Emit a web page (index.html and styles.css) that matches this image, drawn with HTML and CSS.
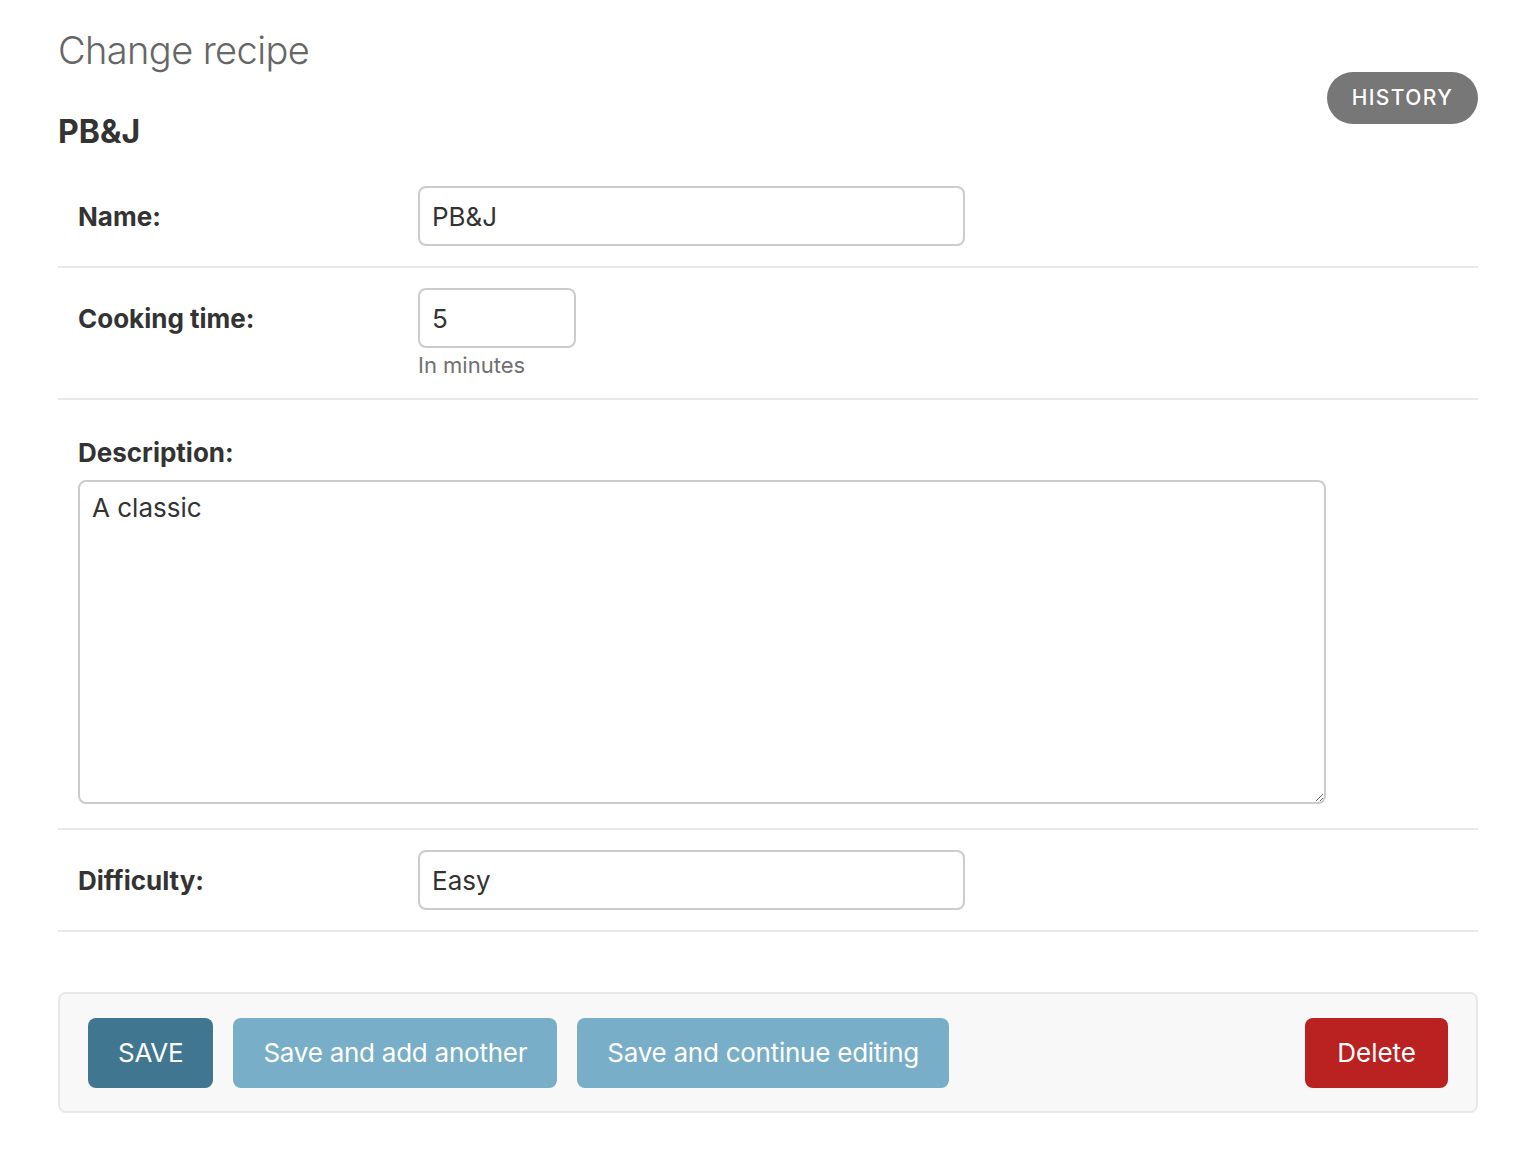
FILE: index.html
```html
<!DOCTYPE html>
<html lang="en">
<head>
<meta charset="utf-8">
<title>Change recipe</title>
<link rel="stylesheet" href="styles.css">
</head>
<body>
<div class="page">
  <div class="titlebar">
    <div class="titles">
      <h1 class="page-title">Change recipe</h1>
      <h2 class="object-title">PB&amp;J</h2>
    </div>
    <a class="history" href="#">History</a>
  </div>

  <form class="form">
    <div class="form-row">
      <label class="label">Name:</label>
      <div class="field">
        <input class="input input-wide" type="text" value="PB&amp;J">
      </div>
    </div>
    <div class="form-row">
      <label class="label">Cooking time:</label>
      <div class="field">
        <input class="input input-small" type="text" value="5">
        <div class="help">In minutes</div>
      </div>
    </div>
    <div class="form-row form-row-stacked">
      <label class="label label-stacked">Description:</label>
      <textarea class="textarea">A classic</textarea>
    </div>
    <div class="form-row">
      <label class="label">Difficulty:</label>
      <div class="field">
        <input class="input input-wide" type="text" value="Easy">
      </div>
    </div>

    <div class="submit-row">
      <button type="button" class="btn btn-default">SAVE</button>
      <button type="button" class="btn">Save and add another</button>
      <button type="button" class="btn">Save and continue editing</button>
      <a class="btn btn-delete" href="#">Delete</a>
    </div>
  </form>
</div>
</body>
</html>
```

FILE: styles.css
```css
html, body {
  margin: 0;
  padding: 0;
  background: #ffffff;
}

body {
  font-family: "Inter", "Noto Sans", "Liberation Sans", sans-serif;
  color: #333333;
}

.page {
  padding: 26px 50px 40px 58px;
}

.titlebar {
  display: flex;
  justify-content: space-between;
  align-items: flex-start;
}

.page-title {
  margin: 0;
  font-size: 38px;
  line-height: 48px;
  font-weight: 300;
  letter-spacing: -0.6px;
  color: #666666;
}

.object-title {
  margin: 38px 0 0 0;
  font-size: 32px;
  line-height: 40px;
  font-weight: 700;
  color: #333333;
}

.history {
  margin-top: 46px;
  display: block;
  width: 151px;
  height: 52px;
  box-sizing: border-box;
  line-height: 52px;
  text-align: center;
  border-radius: 26px;
  background: #777777;
  color: #ffffff;
  text-decoration: none;
  text-transform: uppercase;
  font-size: 21px;
  font-weight: 500;
  letter-spacing: 1.4px;
}

.form {
  margin-top: 14px;
}

.form-row {
  display: flex;
  align-items: flex-start;
  padding: 20px 20px 20px 20px;
  border-bottom: 2px solid #e8e8e8;
}

.form-row-stacked {
  flex-direction: column;
  padding-bottom: 24px;
}

.label {
  width: 340px;
  flex: none;
  padding-top: 2px;
  font-size: 26px;
  line-height: 58px;
  font-weight: 700;
  color: #333333;
}

.label-stacked {
  line-height: 36px;
  padding-top: 15px;
  width: auto;
}

.field {
  display: flex;
  flex-direction: column;
}

.input {
  box-sizing: border-box;
  height: 60px;
  border: 2px solid #cccccc;
  border-radius: 8px;
  padding: 0 12px;
  font-family: "Inter", "Noto Sans", "Liberation Sans", sans-serif;
  font-size: 26px;
  color: #333333;
  background: #ffffff;
}

.input-wide {
  width: 547px;
}

.input-small {
  width: 158px;
}

.help {
  margin-top: 4px;
  font-size: 22px;
  line-height: 26px;
  color: #707070;
}

.textarea {
  display: block;
  box-sizing: border-box;
  margin-top: 9px;
  width: 1248px;
  height: 324px;
  border: 2px solid #cccccc;
  border-radius: 8px;
  padding: 9px 12px;
  font-family: "Inter", "Noto Sans", "Liberation Sans", sans-serif;
  font-size: 26px;
  line-height: 34px;
  color: #333333;
  background: #ffffff;
}

.submit-row {
  margin-top: 60px;
  display: flex;
  align-items: center;
  gap: 20px;
  padding: 24px 28px 23px 28px;
  background: #f8f8f8;
  border: 2px solid #e8e8e8;
  border-radius: 8px;
}

.btn {
  box-sizing: border-box;
  height: 70px;
  padding: 0 30px;
  border: none;
  border-radius: 8px;
  background: #79aec8;
  color: #ffffff;
  font-family: "Inter", "Noto Sans", "Liberation Sans", sans-serif;
  font-size: 26px;
  line-height: 70px;
  font-weight: 400;
  letter-spacing: -0.25px;
  text-decoration: none;
  cursor: pointer;
}

.btn-default {
  background: #417690;
}

.btn-delete {
  margin-left: auto;
  display: block;
  background: #ba2121;
  padding: 0 32px;
  letter-spacing: 0;
}
```
